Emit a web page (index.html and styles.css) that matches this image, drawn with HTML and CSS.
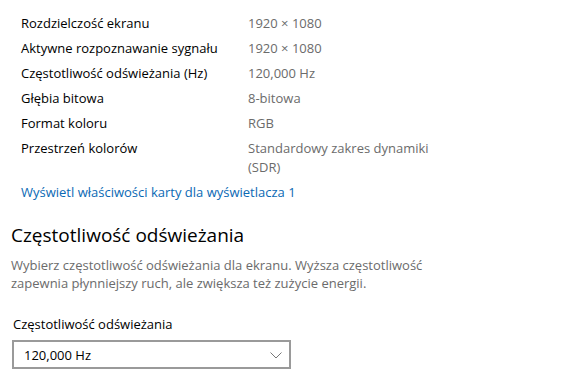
FILE: index.html
```html
<!DOCTYPE html>
<html>
<head>
	<meta charset="utf-8">
	<title>Ekran</title>
	<link rel="stylesheet" href="styles.css">
</head>
<body>

	<section class="infoC">
		<div class="rowC"><span class="keyC">Rozdzielczość ekranu</span><span class="valC">1920 × 1080</span></div>
		<div class="rowC"><span class="keyC">Aktywne rozpoznawanie sygnału</span><span class="valC">1920 × 1080</span></div>
		<div class="rowC"><span class="keyC">Częstotliwość odświeżania (Hz)</span><span class="valC">120,000 Hz</span></div>
		<div class="rowC"><span class="keyC">Głębia bitowa</span><span class="valC">8-bitowa</span></div>
		<div class="rowC"><span class="keyC">Format koloru</span><span class="valC">RGB</span></div>
		<div class="rowC"><span class="keyC">Przestrzeń kolorów</span><span class="valC">Standardowy zakres dynamiki<br>(SDR)</span></div>
		<a class="linkC" href="#">Wyświetl właściwości karty dla wyświetlacza 1</a>
	</section>

	<section class="rateC">
		<h2>Częstotliwość odświeżania</h2>
		<p class="descC">Wybierz częstotliwość odświeżania dla ekranu. Wyższa częstotliwość<br>zapewnia płynniejszy ruch, ale zwiększa też zużycie energii.</p>
		<div class="labelC">Częstotliwość odświeżania</div>
		<div class="selectC">
			<span>120,000 Hz</span>
			<svg width="12" height="7" viewBox="0 0 12 7"><path d="M0.5 0.5 L6 6 L11.5 0.5" fill="none" stroke="#777" stroke-width="1"/></svg>
		</div>
	</section>

</body>
</html>
```
FILE: styles.css
```css
*,*:after,*:before{border: 0;margin: 0;padding: 0;box-sizing: border-box;}
body{
	font-family: "Open Sans", "Noto Sans", sans-serif;
	font-size: 13px;
	color: #000;
	background: #fff;
}

.infoC{padding: 14px 0 0 21px;}
.rowC{display: flex; line-height: 19px; margin-bottom: 6px;}
.keyC{width: 227px;}
.valC{color: #6b6b6b;}
.linkC{display: block; margin-top: 6px; color: #0a69b4; text-decoration: none; line-height: 19px;}

.rateC{padding: 20px 0 0 11px;}
h2{font-size: 19px; font-weight: normal; line-height: 26px;}
.descC{color: #6b6b6b; line-height: 18px; margin-top: 8px;}
.labelC{margin-top: 23px; padding-left: 2px; line-height: 19px;}
.selectC{
	margin: 6px 0 0 1px;
	width: 279px;
	height: 29px;
	border: 2px solid #9a9a9a;
	display: flex;
	align-items: center;
	justify-content: space-between;
	padding: 1px 7px 0 10px;
}
```
